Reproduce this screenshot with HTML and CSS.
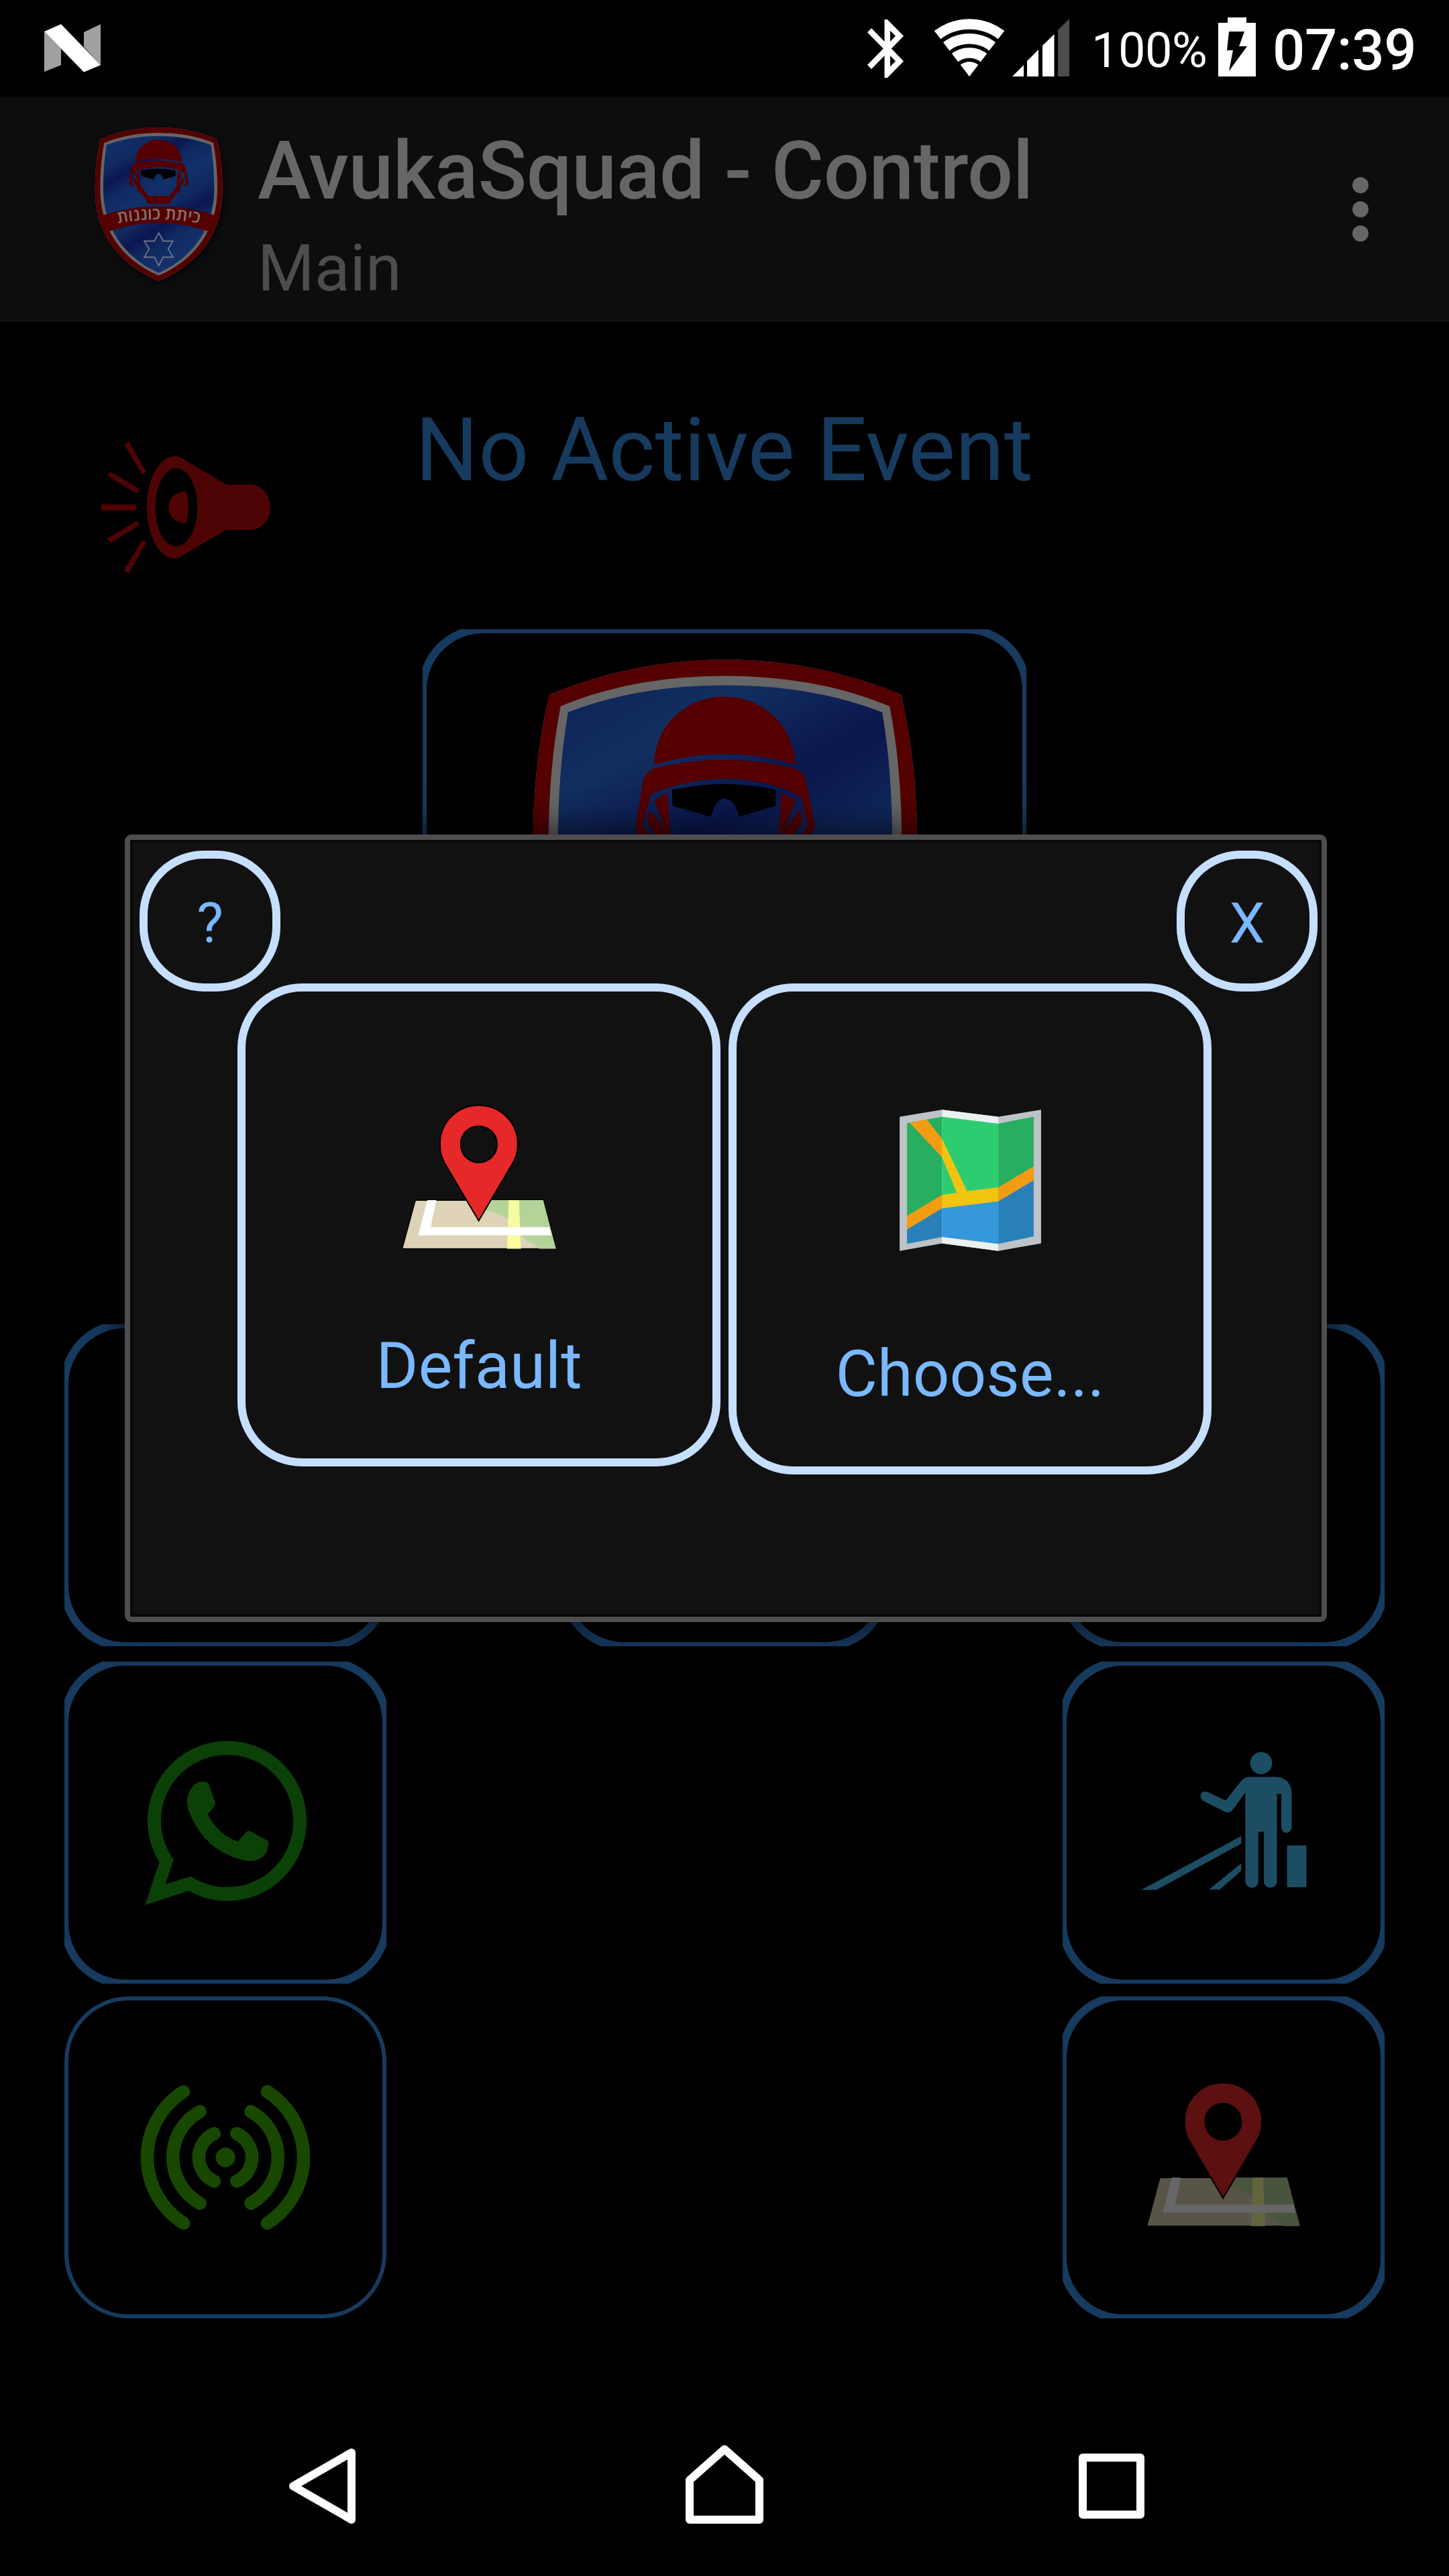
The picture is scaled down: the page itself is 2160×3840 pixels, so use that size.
FILE: index.html
```html
<!DOCTYPE html>
<html lang="en">
<head>
<meta charset="utf-8">
<title>AvukaSquad - Control</title>
<link rel="stylesheet" href="styles.css">
</head>
<body>
<svg class="defs" aria-hidden="true">
  <defs>
    <linearGradient id="field-small" gradientUnits="userSpaceOnUse" x1="0" y1="0" x2="400" y2="688">
      <stop offset=".2" stop-color="#13306a"/><stop offset=".34" stop-color="#102a60"/><stop offset=".415" stop-color="#0b1650"/><stop offset=".48" stop-color="#102860"/><stop offset=".58" stop-color="#12306a"/><stop offset=".7" stop-color="#10285f"/><stop offset=".775" stop-color="#0b1650"/><stop offset=".85" stop-color="#10285f"/><stop offset=".95" stop-color="#13306a"/>
    </linearGradient>
    <linearGradient id="field-large" gradientUnits="userSpaceOnUse" x1="0" y1="0" x2="400" y2="688">
      <stop offset=".2" stop-color="#0f2458"/><stop offset=".35" stop-color="#122e60"/><stop offset=".46" stop-color="#0e2055"/><stop offset=".54" stop-color="#0a164c"/><stop offset=".67" stop-color="#0f265a"/><stop offset=".9" stop-color="#12306a"/>
    </linearGradient>
    <path id="shield" d="M89 112Q215 60 350 60Q485 60 611 112Q635 215 635 335C635 520 550 658 350 748C150 658 65 520 65 335Q65 215 89 112Z"/>
    <path id="motto-line" d="M80 510Q350 432 620 510"/>
    <symbol id="emblem" viewBox="0 0 720 810">
      <path fill="#666" fill-rule="evenodd" d="M89 112Q215 60 350 60Q485 60 611 112Q635 215 635 335C635 520 550 658 350 748C150 658 65 520 65 335Q65 215 89 112ZM117 138Q220 98 350 98Q480 98 583 138Q598 225 598 335C598 500 510 640 350 710C190 640 102 500 102 335Q102 225 117 138Z"/>
      <path fill="#540000" fill-rule="evenodd" d="M89 112Q215 60 350 60Q485 60 611 112Q635 215 635 335C635 520 550 658 350 748C150 658 65 520 65 335Q65 215 89 112ZM106 129Q215 84 350 84Q485 84 594 129Q612 220 612 335C612 510 520 648 350 722C180 648 88 510 88 335Q88 220 106 129Z"/>
      <g fill="#540000">
        <path d="M245 216C245 155 295 115 349 115C403 115 452 155 454 216Q349 184 245 216Z"/>
        <path d="M245 221Q349 196 452 221Q467 227 470 240L483 305Q483 322 462 323L472 305L463 265Q450 257 437 251Q349 222 262 251Q248 254 239 262L228 305L240 323Q218 324 217 310L228 240Q231 227 245 221Z"/>
        <path d="M245 269L264 257L269 320L261 312ZM454 269L434 257L429 320L438 312Z"/>
        <path d="M238 283L304 366H398L460 283L466 300L446 328L443 350L432 352L408 384Q402 402 388 402H314Q300 402 294 384L268 352L255 347L252 328L234 300Z"/>
        <path d="M85 457Q350 368 615 457L582 528Q350 446 118 528Z"/>
      </g>
      <path fill="#000" d="M271 253Q349 236 425 253V277L371 293Q364 267 349 266Q336 267 329 293L272 277Z"/>
      <path fill="none" stroke="#747b8c" stroke-width="5" d="M350 532L370 568H414L392 604L414 640H370L350 678L330 640H285L307 604L285 568H330Z"/>
      <text class="motto" text-anchor="middle"><textPath href="#motto-line" startOffset="50%">כיתת כוננות</textPath></text>
    </symbol>
    <symbol id="pin-map" viewBox="695 525 387 282" preserveAspectRatio="none">
      <path fill="#ded2b8" stroke="#000" stroke-width="2" d="M733 709H1044L1076 799H701Z"/>
      <path fill="#b4d398" d="M905 709H1044L1075 799H1034C1020 785 1002 788 992 773L985 745C950 748 940 730 905 728Z"/>
      <path fill="#f7fc9e" d="M960 709H985L990 799H956Z"/>
      <path fill="#fff" d="M762 709H784L770 759H1059L1064 774H740Z"/>
      <path fill="#e62828" stroke="#000" stroke-width="3" fill-rule="evenodd" d="M887 747L803 639Q793 624 793 605C793 564 835 533 887 533C939 533 982 564 982 605Q982 624 971 639ZM887 572C862 572 843 587 843 605C843 624 862 639 887 639C912 639 932 624 932 605C932 587 912 572 887 572Z"/>
    </symbol>
  </defs>
</svg>

<div class="phone">
  <header class="status">
    <svg class="status-n" viewBox="65 36 86 72"><path fill="#a0a0a0" d="M66 47L91 73V97L66 107ZM125 48L150 36V97L125 70Z"/><path fill="#fff" d="M66 47L91 36L150 97L125 107.500Z"/></svg>
    <svg class="status-bt" viewBox="5 2 12.710 20" preserveAspectRatio="none"><path fill="#fff" d="M17.710 7.710L12 2h-1v7.590L6.410 5 5 6.410 10.590 12 5 17.590 6.410 19 11 14.410V22h1l5.710-5.710-4.300-4.290 4.300-4.290zM13 5.830l1.880 1.880L13 9.590V5.830zm1.880 10.460L13 18.170v-3.760l1.880 1.880z"/></svg>
    <svg class="status-wifi" viewBox="-52 -86 104 86">
      <clipPath id="wedge"><path d="M0 0L-68 -88.600H68Z"/></clipPath>
      <g clip-path="url(#wedge)"><circle r="22" fill="#fff"/><g fill="none" stroke="#fff" stroke-width="15.500"><circle r="35.300"/><circle r="56.300"/><circle r="78"/></g></g>
    </svg>
    <svg class="status-signal" viewBox="0 0 85 86"><path fill="#fff" d="M0 86L17 69V86ZM22 86V63L39 46V86ZM45 86V40L62.500 23V86Z"/><path fill="#4d4d4d" d="M68 86V17L85 0V86Z"/></svg>
    <span class="percent">100%</span>
    <svg class="status-battery" viewBox="0 0 56 88"><path fill="#fff" fill-rule="evenodd" d="M14 0H42V8H56V88H0V8H14ZM16 21L13 49H22L16 80L43 43H31L39 21Z"/></svg>
    <span class="clock">07:39</span>
  </header>

  <section class="appbar">
    <svg class="emblem-small" viewBox="0 0 720 810"><use href="#shield" fill="url(#field-small)"/><use href="#emblem" width="720" height="810"/></svg>
    <div class="titles">
      <h1 class="title">AvukaSquad - Control</h1>
      <p class="subtitle">Main</p>
    </div>
    <div class="overflow"><i class="dot"></i><i class="dot"></i><i class="dot"></i></div>
  </section>

  <main class="content">
    <div class="event">
      <svg class="siren" viewBox="90 290 510 600" preserveAspectRatio="none"><g fill="#4e0404">
        <path d="M165 308L178 292L229 428L217 440ZM115 446L125 428L210 506L202 526ZM98 574H200V602H98ZM115 728L125 747L210 667L202 648ZM165 868L178 883L229 746L217 735Z"/>
        <path fill-rule="evenodd" d="M312 359Q326 359 340 375L463 486H532C565 486 592 530 592 588C592 646 565 689 532 689H463L340 798Q326 816 312 816C268 816 231 714 231 588C231 461 268 359 312 359ZM317 412C283 412 256 490 256 588C256 685 283 762 317 762C352 762 379 685 379 588C379 490 352 412 317 412Z"/>
        <path d="M345 516Q352 540 352 588Q352 636 345 660C318 660 294 628 294 588C294 547 318 516 345 516Z"/>
      </g></svg>
      <h2 class="event-title">No Active Event</h2>
    </div>

    <div class="tile clipped hero">
      <svg class="emblem-large" viewBox="0 0 720 810"><use href="#shield" fill="url(#field-large)"/><use href="#emblem" width="720" height="810"/></svg>
    </div>

    <div class="tiles">
      <div class="tile clipped"></div>
      <div class="tile clipped"></div>
      <div class="tile clipped"></div>
      <div class="tile clipped">
        <svg class="whatsapp" viewBox="430 230 690 378" preserveAspectRatio="none"><g fill="#0b4107">
          <path fill-rule="evenodd" d="M436 603L496 507Q447 463 447 414C447 316 596 235 780 235C964 235 1112 316 1112 414C1112 513 964 594 780 594Q695 594 619 571ZM521 556L628 539Q700 563 780 563C934 563 1056 497 1056 414C1056 332 934 266 780 266C626 266 503 332 503 414Q503 460 556 502Z"/>
          <path d="M655 328Q675 325 695 328Q702 330 705 335L731 375Q727 382 699 399Q740 445 824 461Q842 450 858 440Q866 435 878 438L947 458Q954 460 952 468Q948 488 925 496C895 507 860 506 825 499C735 484 675 455 632 408Q612 388 612 370Q615 343 655 328Z"/>
        </g></svg>
      </div>
      <div class="tile clipped third">
        <svg class="checkin" viewBox="420 255 700 318" preserveAspectRatio="none"><g fill="#1c4d63">
          <ellipse cx="924" cy="284" rx="46" ry="25"/>
          <path d="M875 315H990C1025 317 1051 330 1051 350V430Q1046 441 1029 441Q1012 440 1008 430V353H990V552Q984 564 962 564Q940 563 935 552V438H912V552Q906 564 885 564Q863 563 858 552V350L808 387Q795 397 775 394L680 368Q668 362 672 354Q680 345 700 349L776 368L838 326Q852 315 875 315Z"/>
          <path d="M1032 469H1113V563H1032ZM841 448V465L487 569H423ZM841 509V526L751 568H706Z"/>
        </g></svg>
      </div>
      <div class="tile full">
        <svg class="broadcast" viewBox="-128 -112 256 224"><circle r="14.500" fill="#184700"/><g fill="none" stroke="#184700" stroke-width="19.600" stroke-linecap="round">
          <path d="M-16.800 -35.500A39 39 0 0 0 -16.800 35.500M-38 -68.300A78 78 0 0 0 -38 68.300M-62.500 -98A116 116 0 0 0 -62.500 98"/>
          <path d="M16.800 -35.500A39 39 0 0 1 16.800 35.500M38 -68.300A78 78 0 0 1 38 68.300M62.500 -98A116 116 0 0 1 62.500 98"/>
        </g></svg>
      </div>
      <div class="tile clipped third">
        <svg class="pin dim"><use href="#pin-map"/></svg>
      </div>
    </div>
  </main>

  <footer class="nav">
    <svg class="nav-icon" viewBox="420 3636 120 136"><path fill="none" stroke="#fff" stroke-width="12" stroke-linejoin="round" d="M524 3656V3756L437 3706Z"/></svg>
    <svg class="nav-icon" viewBox="1020 3636 120 136"><path fill="none" stroke="#fff" stroke-width="12" stroke-linejoin="round" d="M1028 3697L1080 3651L1132 3697V3756H1028Z"/></svg>
    <svg class="nav-icon" viewBox="1597 3636 120 136"><rect x="1614" y="3663.500" width="86" height="85" fill="none" stroke="#fff" stroke-width="12" stroke-linejoin="round"/></svg>
  </footer>

  <div class="dialog" role="dialog">
    <div class="dialog-bar">
      <button class="round">?</button>
      <button class="round">X</button>
    </div>
    <div class="choices">
      <button class="choice">
        <svg class="pin"><use href="#pin-map"/></svg>
        <span class="choice-label">Default</span>
      </button>
      <button class="choice choose">
        <svg class="map" viewBox="470 537 354 270" preserveAspectRatio="none">
          <path fill="#bdc3c7" d="M475 554L578 541L715 554L819 541V789L715 803L578 789L475 803Z"/>
          <path fill="#ecf0f1" d="M578 541L715 554V803L578 789Z"/>
          <path fill="#27ae60" d="M493 566L578 554V720L493 745ZM715 567L801 554V660L715 700Z"/>
          <path fill="#2ecc71" d="M578 554L715 567V700L578 710Z"/>
          <path fill="#2980b9" d="M493 755L578 715V777L493 790ZM715 703L801 665V776L715 790Z"/>
          <path fill="#3498db" d="M578 715L715 703V790L578 777Z"/>
          <path fill="#f39c12" d="M499 565L541 559L578 595V629ZM493 738L578 699V724L493 763ZM715 685L801 646V672L715 711Z"/>
          <path fill="#f1c40f" d="M578 595L639 692L715 685V711L578 724V699L614 695L578 629Z"/>
        </svg>
        <span class="choice-label">Choose...</span>
      </button>
    </div>
  </div>
</div>
</body>
</html>
```
FILE: styles.css
```css
* { box-sizing: border-box; margin: 0; padding: 0; }

body { background: #000; font-family: Roboto, "Liberation Sans", sans-serif; font-weight: 400; }

svg { display: block; flex: none; }
.defs { position: absolute; width: 0; height: 0; }

.phone {
  position: relative;
  display: flex;
  flex-direction: column;
  width: 2160px;
  height: 3840px;
  overflow: hidden;
  background: #000;
}

/* Status bar */
.status { display: flex; align-items: flex-start; height: 144px; padding-left: 65px; color: #fff; white-space: nowrap; }
.status-n { width: 86px; height: 72px; margin: 36px auto 0 0; }
.status-bt { width: 54px; height: 87px; margin: 29px 46px 0 0; }
.status-wifi { width: 104px; height: 86px; margin: 28px 12px 0 0; }
.status-signal { width: 85px; height: 86px; margin: 28px 33px 0 0; }
.percent { width: 189px; font-size: 72px; letter-spacing: -.5px; line-height: 151px; }
.status-battery { width: 56px; height: 88px; margin-top: 26px; }
.clock { width: 288px; padding-left: 25px; font-size: 85px; letter-spacing: -.3px; font-weight: 500; line-height: 150px; }

/* App bar */
.appbar { display: flex; height: 336px; padding: 26px 120px 0; background: #0d0d0d; }
.emblem-small { width: 240px; height: 270px; filter: drop-shadow(3px 4px 4px rgba(0, 0, 0, .6)); }
.titles { flex: 1; padding: 15px 0 0 24px; }
.title { color: #666; font-size: 120px; font-weight: 500; letter-spacing: -.35px; line-height: 140px; white-space: nowrap; }
.subtitle { margin-top: 15px; color: #4d4d4d; font-size: 97px; line-height: 120px; }
.overflow { display: flex; flex-direction: column; gap: 12px; padding-top: 94px; }
.dot { width: 24px; height: 24px; border-radius: 50%; background: #666; }

.motto { fill: #84736f; font: 600 74px "Open Sans", "DejaVu Sans", sans-serif; direction: rtl; }

/* Home screen */
.content { flex: 1; }
.event { display: flex; height: 458px; padding: 111px 0 0 147px; }
.siren { width: 260px; height: 200px; margin-top: 66px; }
.event-title { padding-left: 212px; color: #173a5f; font-size: 132px; font-weight: 400; line-height: 160px; white-space: nowrap; }

.tile { display: flex; align-items: center; justify-content: center; position: relative; width: 480px; height: 480px; overflow: hidden; }
.clipped::after { content: ""; position: absolute; inset: -6px; border: 12px solid #173a5f; border-radius: 96px; }
.full { border: 6px solid #173a5f; border-radius: 96px; }

.hero { align-items: flex-start; width: 900px; height: 900px; margin-left: 630px; }
.emblem-large { width: 724px; height: 814px; margin: -15px 0 0 21px; }

.tiles {
  display: grid;
  grid-template-columns: repeat(3, 480px);
  grid-template-rows: 485px 481px 481px;
  justify-content: space-between;
  row-gap: 18px;
  padding: 136px 96px 0;
}
.third { grid-column: 3; }
.whatsapp { width: 246px; height: 251px; margin-left: 2px; }
.checkin { width: 250px; height: 211px; margin-top: -6px; margin-left: 2px; }
.broadcast { width: 256px; height: 224px; }
.pin { width: 237px; height: 227px; }
.dim { width: 236px; opacity: .4; margin-top: -9px; }

/* Navigation bar */
.nav { display: flex; gap: 480px; height: 204px; padding-left: 420px; }
.nav-icon { width: 120px; height: 136px; }
.nav-icon:last-child { margin-left: -23px; }

/* Dialog */
.dialog {
  position: absolute;
  left: 186px;
  top: 1244px;
  width: 1792px;
  height: 1174px;
  border: 8px solid #4e4e4e;
  border-radius: 10px;
  background: #111;
  box-shadow: inset 0 0 3px 3px #080808, 0 0 50px 10px rgba(0, 0, 0, .6);
}
.dialog-bar { display: flex; justify-content: space-between; height: 214px; padding: 16px 6px 0 14px; }
.round, .choice { border: 12px solid #c6dfff; border-radius: 96px; background: none; color: #7ab8ff; font-family: inherit; }
.round { width: 210px; height: 210px; font-size: 84px; line-height: 194px; }
.choices { display: flex; align-items: flex-start; gap: 12px; padding-left: 160px; }
.choice { display: flex; flex-direction: column; align-items: center; width: 720px; height: 720px; padding-top: 163px; }
.choice-label { margin-top: 108px; font-size: 96px; line-height: 120px; }
.choose { height: 732px; padding-top: 173px; }
.choose .choice-label { margin-top: 120px; }
.map { width: 217px; height: 217px; }
```
